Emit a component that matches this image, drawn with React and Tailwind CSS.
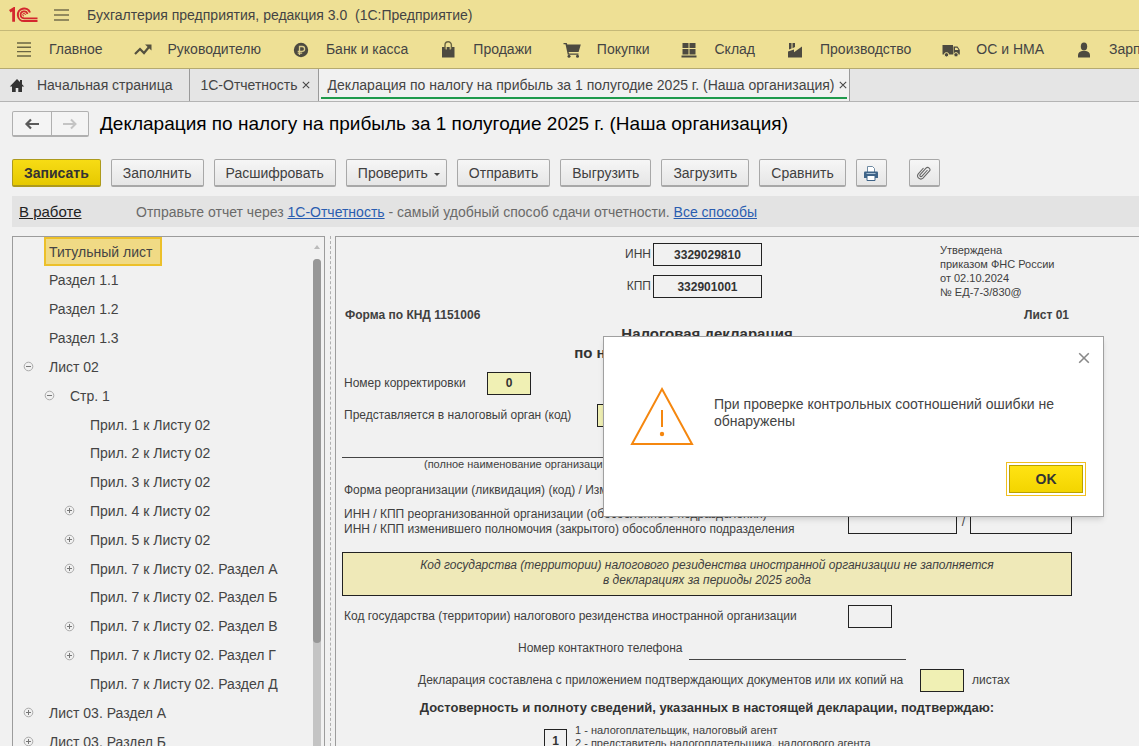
import React from 'react';
import clsx from 'clsx';

const MenuLinesIcon = () => (
  <svg className="w-[18px] h-[18px] shrink-0" viewBox="0 0 18 18" fill="none" stroke="#6b6543" strokeWidth="1.4">
    <path d="M2 3h14M2 7.3h14M2 11.6h14M2 16h14" />
  </svg>
);

const TrendIcon = () => (
  <svg className="w-[18px] h-[18px] shrink-0" viewBox="0 0 18 18" fill="none" stroke="#55513f" strokeWidth="2.2">
    <path d="M1 14l5-5 4 4 5-6" />
    <path d="M11 4.5h6.500v6z" fill="#55513f" stroke="none" />
  </svg>
);

const RubleIcon = () => (
  <svg className="w-[18px] h-[18px] shrink-0" viewBox="0 0 18 18">
    <circle cx="9" cy="10" r="7.2" fill="#4d4a40" />
    <path d="M7.5 15V6.500h2.700a2.300 2.300 0 010 4.800H5.700M5.700 13.200h4.500" fill="none" stroke="#d9cc8a" strokeWidth="1.3" />
  </svg>
);

const BagIcon = () => (
  <svg className="w-[18px] h-[18px] shrink-0" viewBox="0 0 18 18">
    <path d="M3 7h12.500v10.500H3z" fill="#4d4a40" />
    <path d="M6 9V5a3.200 3.200 0 016.400 0v4" fill="none" stroke="#6b6543" strokeWidth="1.4" />
    <path d="M7.200 7v2.500M11.200 7v2.500" stroke="#eee095" strokeWidth="1" />
  </svg>
);

const CartIcon = () => (
  <svg className="w-[18px] h-[18px] shrink-0" viewBox="0 0 18 18">
    <path d="M.5 3h3.200l.6 1.500H17.800l-2.200 7.500H5.600l.4 1.500h9.500v1.200H4.800L2.500 4.300h-2z" fill="#4d4a40" />
    <circle cx="6" cy="16.300" r="1.500" fill="#4d4a40" />
    <circle cx="14.500" cy="16.300" r="1.500" fill="#4d4a40" />
  </svg>
);

const StockIcon = () => (
  <svg className="w-[18px] h-[18px] shrink-0" viewBox="0 0 18 18" fill="#4d4a40">
    <path d="M2.500 3h6v5h-6zM9.500 3h6v5h-6zM2.500 9h6v5.500h-6zM9.500 9h6v5.500h-6zM1.500 15.500h15v2h-15z" />
  </svg>
);

const FactoryIcon = () => (
  <svg className="w-[18px] h-[18px] shrink-0" viewBox="0 0 18 18" fill="#4d4a40">
    <path d="M2 17.500v-6l6-2v2.700l8-5.700v11z" />
    <path d="M3 3h2.500v5.500L3 9.500zM6.500 3H9v4L6.500 8.200z" />
  </svg>
);

const TruckIcon = () => (
  <svg className="w-[18px] h-[18px] shrink-0" viewBox="0 0 18 18">
    <path d="M.5 5H11v9.500H.5zM11.500 6.500h4l2.300 3.500v4.500h-6.300z" fill="#4d4a40" />
    <path d="M13 7.700h2.200l1.300 2.300H13z" fill="#eee095" />
    <circle cx="4.500" cy="14.800" r="2.200" fill="#4d4a40" stroke="#eee095" />
    <circle cx="14" cy="14.800" r="2.200" fill="#4d4a40" stroke="#eee095" />
  </svg>
);

const PersonIcon = () => (
  <svg className="w-[18px] h-[18px] shrink-0" viewBox="0 0 18 18" fill="#4d4a40">
    <ellipse cx="9" cy="6.500" rx="3.200" ry="4" />
    <path d="M3 17.500V15c0-2.500 2-3.500 4-4h4c2 .5 4 1.500 4 4v2.500z" />
  </svg>
);

const HomeIcon = () => (
  <svg className="w-4 h-4 shrink-0" viewBox="0 0 16 16" fill="#333">
    <path d="M8 2L.8 9.500h2.200V15h3.700v-4h2.600v4H13V9.500h2.200l-2.200-2.300V3h-2v2z" />
  </svg>
);

const LogoIcon = () => (
  <svg className="w-[30px] h-4 shrink-0" viewBox="0 0 30 16" fill="none" stroke="#d4272e">
    <path d="M.8 4.200L4.600 1.800V14.800" strokeWidth="2.800" />
    <path d="M21 5.500A6.300 6.300 0 1015 14.100H28.500" strokeWidth="2" />
    <path d="M18.500 7A3.500 3.500 0 1015 11.300H28.500" strokeWidth="1.700" />
    <path d="M16.300 8a1.300 1.300 0 10-1.300 1" strokeWidth="1" />
  </svg>
);

const CloseIcon = ({ className }) => (
  <svg className={className} viewBox="0 0 10 10" fill="none" stroke="currentColor" strokeWidth="1.3">
    <path d="M1 1l8 8M9 1l-8 8" />
  </svg>
);

const PrinterIcon = () => (
  <svg className="w-4 h-4" viewBox="0 0 16 16">
    <path d="M4.500 7V1.500h5l2 2V7" fill="#fff" stroke="#6f8aa3" />
    <path d="M1 7.500Q1 6.500 2 6.500h12q1 0 1 1V13H1z" fill="#3f6488" />
    <path d="M4 10.500h8v5H4z" fill="#fff" stroke="#3f6488" />
    <path d="M3.500 8.500h9" stroke="#a9c0d5" />
  </svg>
);

const ClipIcon = () => (
  <svg className="w-4 h-4" viewBox="0 0 16 16" fill="none" stroke="#666" strokeWidth="1.1">
    <path d="M11.500 5L6 11.200a1.200 1.200 0 01-1.800-1.600L10 3.200a2.200 2.200 0 013.300 3L7 13.200a3.200 3.200 0 01-4.700-4.300L7.500 3" />
  </svg>
);

const sections = [
  { title: 'Главное', Icon: MenuLinesIcon },
  { title: 'Руководителю', Icon: TrendIcon },
  { title: 'Банк и касса', Icon: RubleIcon },
  { title: 'Продажи', Icon: BagIcon },
  { title: 'Покупки', Icon: CartIcon },
  { title: 'Склад', Icon: StockIcon },
  { title: 'Производство', Icon: FactoryIcon },
  { title: 'ОС и НМА', Icon: TruckIcon },
  { title: 'Зарплата и кадры', Icon: PersonIcon },
];

const tree = [
  { title: 'Титульный лист', level: 0, active: true },
  { title: 'Раздел 1.1', level: 0 },
  { title: 'Раздел 1.2', level: 0 },
  { title: 'Раздел 1.3', level: 0 },
  { title: 'Лист 02', level: 0, toggle: 'open' },
  { title: 'Стр. 1', level: 1, toggle: 'open' },
  { title: 'Прил. 1 к Листу 02', level: 2 },
  { title: 'Прил. 2 к Листу 02', level: 2 },
  { title: 'Прил. 3 к Листу 02', level: 2 },
  { title: 'Прил. 4 к Листу 02', level: 2, toggle: 'closed' },
  { title: 'Прил. 5 к Листу 02', level: 2, toggle: 'closed' },
  { title: 'Прил. 7 к Листу 02. Раздел А', level: 2, toggle: 'closed' },
  { title: 'Прил. 7 к Листу 02. Раздел Б', level: 2 },
  { title: 'Прил. 7 к Листу 02. Раздел В', level: 2, toggle: 'closed' },
  { title: 'Прил. 7 к Листу 02. Раздел Г', level: 2, toggle: 'closed' },
  { title: 'Прил. 7 к Листу 02. Раздел Д', level: 2 },
  { title: 'Лист 03. Раздел А', level: 0, toggle: 'closed' },
  { title: 'Лист 03. Раздел Б', level: 0, toggle: 'closed' },
];

const levelPadding = ['pl-[10px]', 'pl-[31px]', 'pl-[51px]'];

const ToolButton = ({ children, primary, className, ...rest }) => (
  <button
    type="button"
    className={clsx(
      'h-7 shrink-0 flex items-center justify-center rounded-[2px] border border-b-2 whitespace-nowrap',
      primary
        ? 'bg-gradient-to-b from-[#f7dc14] to-[#e6c900] border-[#ad9a1c] font-bold text-[#333]'
        : 'bg-gradient-to-b from-[#f6f6f6] to-[#e6e6e6] border-[#a8a8a8] text-[#404040]',
      className || 'px-[11px]'
    )}
    {...rest}
  >
    {children}
  </button>
);

const FormBox = ({ className, ...rest }) => (
  <input
    type="text"
    readOnly
    className={clsx('h-[23px] shrink-0 border border-[#222] text-center text-[12px] font-bold text-[#333] outline-none', className)}
    {...rest}
  />
);

const Header = () => (
  <header className="bg-[#eee095] text-[#444]">
    <div className="h-[31px] flex items-center border-b border-[#c5b978] pl-[9px]">
      <LogoIcon />
      <button type="button" aria-label="Меню" className="ml-[15px] mr-[18px] flex flex-col gap-[3px]">
        <span className="w-[15px] h-[2px] bg-[#938a5e]"></span>
        <span className="w-[15px] h-[2px] bg-[#938a5e]"></span>
        <span className="w-[15px] h-[2px] bg-[#938a5e]"></span>
      </button>
      <span className="whitespace-pre">Бухгалтерия предприятия, редакция 3.0  (1С:Предприятие)</span>
    </div>
    <nav className="h-[38px] flex items-center gap-[31px] border-b border-[#b5aa70] pl-[15px] pb-0.5 overflow-hidden">
      {sections.map(({ title, Icon }) => (
        <button key={title} type="button" className="flex items-center gap-4 whitespace-nowrap shrink-0">
          <Icon />
          {title}
        </button>
      ))}
    </nav>
  </header>
);

const Tabs = () => (
  <div className="h-[33px] flex bg-[#e5e5e5] border-b border-[#b4b4b4] text-[#444]">
    <button type="button" className="flex items-center gap-3 pl-[9px] pr-[17px] border-r border-[#9a9a9a] whitespace-nowrap">
      <HomeIcon />
      Начальная страница
    </button>
    <div className="flex items-center gap-1 pl-[10px] pr-2 border-r border-[#9a9a9a] whitespace-nowrap">
      <button type="button">1С-Отчетность</button>
      <button type="button" aria-label="Закрыть"><CloseIcon className="w-2 h-2" /></button>
    </div>
    <div className="flex bg-[#f1f1f1] px-0.5 pb-[2px] border-r border-[#9a9a9a]">
      <div className="flex items-center gap-1 pl-[7px] pt-1 border-b-2 border-[#1f9a4c] whitespace-nowrap">
        <button type="button">Декларация по налогу на прибыль за 1 полугодие 2025 г. (Наша организация)</button>
        <button type="button" aria-label="Закрыть"><CloseIcon className="w-2 h-2" /></button>
      </div>
    </div>
  </div>
);

const TitleRow = () => (
  <div className="flex items-center h-[26px] mt-[9px] pl-3">
    <div className="flex h-[26px] w-[77px] border border-b-2 border-[#b0b0b0] rounded-[2px] bg-[#f4f4f4]">
      <button type="button" aria-label="Назад" className="w-[39px] flex items-center justify-center border-r border-[#b0b0b0] text-[#5a5a5a]">
        <svg className="w-4 h-3" viewBox="0 0 16 12" fill="none" stroke="currentColor" strokeWidth="2.2">
          <path d="M15 6H3M7 1.500L2.500 6 7 10.500" />
        </svg>
      </button>
      <button type="button" aria-label="Вперед" className="flex-1 flex items-center justify-center text-[#c4c4c4]">
        <svg className="w-4 h-3" viewBox="0 0 16 12" fill="none" stroke="currentColor" strokeWidth="2">
          <path d="M1 6h12M9 1.500L13.500 6 9 10.500" />
        </svg>
      </button>
    </div>
    <h1 className="ml-[11px] text-[19px] leading-6 text-black whitespace-nowrap">
      Декларация по налогу на прибыль за 1 полугодие 2025 г. (Наша организация)
    </h1>
  </div>
);

const Toolbar = () => (
  <div className="flex gap-2.5 mt-[22px] pl-3">
    <ToolButton primary>Записать</ToolButton>
    <ToolButton>Заполнить</ToolButton>
    <ToolButton>Расшифровать</ToolButton>
    <ToolButton className="pl-[11px] pr-1.5">
      Проверить
      <span className="ml-1.5 mt-1 border-x-[3px] border-t-[3px] border-x-transparent border-t-[#444]"></span>
    </ToolButton>
    <ToolButton>Отправить</ToolButton>
    <ToolButton>Выгрузить</ToolButton>
    <ToolButton>Загрузить</ToolButton>
    <ToolButton>Сравнить</ToolButton>
    <ToolButton className="w-[31px]" aria-label="Печать"><PrinterIcon /></ToolButton>
    <ToolButton className="w-[31px] ml-3" aria-label="Файлы"><ClipIcon /></ToolButton>
  </div>
);

const StatusBar = () => (
  <div className="flex items-center h-[31px] mt-[9px] ml-3 pl-[7px] bg-[#e3e3e3] text-[#6a6a6a] whitespace-nowrap">
    <a href="#status" className="text-[15px] text-[#222] underline w-[117px]">В работе</a>
    <p>
      Отправьте отчет через <a href="#report" className="text-[#2a5db0] underline">1С-Отчетность</a>
      {' '}- самый удобный способ сдачи отчетности.{' '}
      <a href="#ways" className="text-[#2a5db0] underline">Все способы</a>
    </p>
  </div>
);

const TreeToggle = ({ state }) => (
  <button type="button" aria-label={state === 'open' ? 'Свернуть' : 'Развернуть'} className="w-[11px] h-[11px]">
    <svg className="w-[11px] h-[11px]" viewBox="0 0 11 11" fill="none" stroke="#aaa">
      <circle cx="5.500" cy="5.500" r="4.300" />
      <path d={state === 'open' ? 'M3 5.500h5' : 'M3 5.500h5M5.500 3v5'} stroke="#777" />
    </svg>
  </button>
);

const Tree = () => (
  <aside className="w-[313px] shrink-0 flex border border-b-0 border-[#9c9c9c] text-[#444] overflow-hidden">
    <ul className="flex-1 grid grid-rows-[repeat(18,1fr)] h-[519px]">
      {tree.map((item) => (
        <li key={item.title} className={clsx('flex items-center', levelPadding[item.level])}>
          <span className="w-[21px] flex">{item.toggle && <TreeToggle state={item.toggle} />}</span>
          <button
            type="button"
            className={clsx(
              'whitespace-nowrap text-left',
              item.active ? 'h-[29px] pl-[3px] pr-2 border-2 border-[#ecc02a] bg-[#f0da85]' : 'pl-[5px]'
            )}
          >
            {item.title}
          </button>
        </li>
      ))}
    </ul>
    <div className="w-2 mr-[3px] mt-2 flex flex-col items-center">
      <span className="border-x-[3px] border-b-[4px] border-x-transparent border-b-[#bbb]"></span>
      <div className="w-2 flex-1 mt-[10px] bg-[#c4c4c4] rounded-t-full">
        <div className="w-2 h-[384px] bg-[#979797] rounded-full"></div>
      </div>
    </div>
  </aside>
);

const Declaration = () => (
  <main className="flex-1 min-w-0 border-l border-t border-[#9c9c9c] pl-1.5 overflow-hidden text-[12px] leading-[15px] text-[#404040]">
    <div className="w-[730px] whitespace-nowrap">
      <div className="flex justify-between pt-1.5">
        <div className="flex flex-col gap-[9px] pl-[283px]">
          <div className="flex justify-end items-center gap-0.5">
            <label htmlFor="inn">ИНН</label>
            <FormBox id="inn" className="w-[109px]" defaultValue="3329029810" />
          </div>
          <div className="flex justify-end items-center gap-0.5">
            <label htmlFor="kpp">КПП</label>
            <FormBox id="kpp" className="w-[109px]" defaultValue="332901001" />
          </div>
        </div>
        <p className="w-[132px] text-[11px] leading-[14px]">
          Утверждена
          <br />
          приказом ФНС России
          <br />
          от 02.10.2024
          <br />№ ЕД-7-3/830@
        </p>
      </div>

      <div className="flex justify-between pl-[3px] pr-[3px] mt-[9px] font-bold">
        <span>Форма по КНД 1151006</span>
        <span>Лист 01</span>
      </div>
      <h2 className="text-center text-[15px] leading-[19px] font-bold text-[#333] mt-px">
        Налоговая декларация
        <br />
        по налогу на прибыль организаций
      </h2>

      <div className="flex items-center h-8 mt-[5px] pl-0.5">
        <label htmlFor="correction" className="w-[143px]">Номер корректировки</label>
        <FormBox id="correction" className="w-11 bg-[#f0f0b4]" defaultValue="0" />
      </div>
      <div className="flex items-center h-8 pl-0.5">
        <label htmlFor="authority" className="w-[253px]">Представляется в налоговый орган (код)</label>
        <FormBox id="authority" className="w-[88px] bg-[#f0f0b4]" />
      </div>

      <div className="mt-[26px] border-t border-[#444] pl-[82px] text-[11px] leading-[13px]">
        (полное наименование организации / обособленного подразделения)
      </div>
      <p className="pl-0.5 mt-3">Форма реорганизации (ликвидация) (код) / Изменение полномочий (код)</p>

      <div className="flex items-center h-8 mt-2 pl-0.5">
        <p className="w-[504px]">
          ИНН / КПП реорганизованной организации (обособленного подразделения)
          <br />
          ИНН / КПП изменившего полномочия (закрытого) обособленного подразделения
        </p>
        <FormBox aria-label="ИНН" className="w-[109px]" />
        <span className="w-[13px] text-center">/</span>
        <FormBox aria-label="КПП" className="w-[102px]" />
      </div>

      <div className="mt-[14px] h-11 pt-[5px] border border-[#222] bg-[#efe9b8] text-center italic">
        Код государства (территории) налогового резиденства иностранной организации не заполняется
        <br />в декларациях за периоды 2025 года
      </div>

      <div className="flex items-center h-8 mt-1 pl-0.5">
        <label htmlFor="country" className="w-[504px]">Код государства (территории) налогового резиденства иностранной организации</label>
        <FormBox id="country" className="w-11" />
      </div>
      <div className="flex items-center h-8 pl-[176px]">
        <label htmlFor="phone" className="w-[171px]">Номер контактного телефона</label>
        <input id="phone" type="text" readOnly className="w-[217px] h-6 border-b border-[#444] outline-none" />
      </div>
      <div className="flex items-center h-8 pl-[76px]">
        <label htmlFor="sheets" className="w-[502px]">Декларация составлена с приложением подтверждающих документов или их копий на</label>
        <FormBox id="sheets" className="w-11 bg-[#f0f0b4]" />
        <span className="ml-2">листах</span>
      </div>
      <p className="text-center text-[13px] leading-6 font-bold text-[#333]">
        Достоверность и полноту сведений, указанных в настоящей декларации, подтверждаю:
      </p>
      <div className="flex items-start gap-2 mt-1 pl-[202px] text-[11px] leading-[13px]">
        <FormBox aria-label="Кто подтверждает" className="w-[23px] mt-[5px]" defaultValue="1" />
        <p>
          1 - налогоплательщик, налоговый агент
          <br />2 - представитель налогоплательщика, налогового агента
        </p>
      </div>
    </div>
  </main>
);

const MessageDialog = () => (
  <div
    role="alertdialog"
    aria-labelledby="message"
    className="absolute right-[35px] top-[336px] w-[501px] h-[181px] flex flex-col bg-white border border-[#a0a0a0] shadow-md pl-[26px] pr-[17px]"
  >
    <button type="button" aria-label="Закрыть" className="self-end mt-[15px] -mr-1 text-[#888]">
      <CloseIcon className="w-3 h-3" />
    </button>
    <div className="flex items-start gap-5 mt-[22px]">
      <svg className="w-16 h-[60px] shrink-0" viewBox="0 0 64 60" fill="none" stroke="#f5870f" strokeWidth="2">
        <path d="M32 3L62 58H2z" />
        <path d="M32 24v17" />
        <circle cx="32" cy="48" r="2.200" fill="#f5870f" stroke="none" />
      </svg>
      <p id="message" className="w-[350px] mt-[10px] leading-[17px] text-[#444]">
        При проверке контрольных соотношений ошибки не обнаружены
      </p>
    </div>
    <div className="self-end mt-4 border border-[#f0bf20] p-0.5">
      <button type="button" className="block w-[74px] h-7 border border-[#b8a000] bg-gradient-to-b from-[#ffe312] to-[#f3d500] font-bold text-[#333]">
        OK
      </button>
    </div>
  </div>
);

const App = () => {
  return (
    <div className="relative h-screen flex flex-col overflow-hidden bg-[#f1f1f1] font-['Liberation_Sans',Arial,sans-serif] text-[14px] leading-[18px]">
      <Header />
      <Tabs />
      <TitleRow />
      <Toolbar />
      <StatusBar />
      <div className="flex flex-1 min-h-0 mt-[9px] pl-3">
        <Tree />
        <div className="w-[10px] shrink-0 flex justify-center">
          <div className="border-l border-dashed border-[#b0b0b0]"></div>
        </div>
        <Declaration />
      </div>
      <MessageDialog />
    </div>
  );
};

export default App;
